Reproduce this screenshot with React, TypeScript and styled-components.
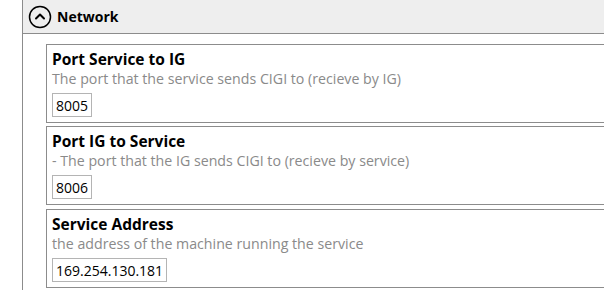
import React from "react";
import styled, { createGlobalStyle } from "styled-components";

const GlobalStyle = createGlobalStyle`
  html, body {
    margin: 0;
    padding: 0;
    background: #ffffff;
    font-family: "Open Sans", "Noto Sans", sans-serif;
    overflow: hidden;
  }
`;

const Page = styled.div`
  width: 604px;
  height: 290px;
  padding-left: 22px;
  box-sizing: border-box;
  overflow: hidden;
`;

const Panel = styled.div`
  height: 100%;
  border-left: 1px solid #8c8c8c;
`;

const Header = styled.div`
  display: flex;
  align-items: center;
  gap: 5px;
  height: 34px;
  padding-left: 5px;
  background: #eeeeee;
  border-bottom: 1px solid #8c8c8c;
  box-sizing: border-box;
`;

const HeaderTitle = styled.span`
  font-size: 14px;
  font-weight: 700;
  color: #000;
`;

const Body = styled.div`
  display: flex;
  flex-direction: column;
  gap: 3px;
  padding: 10px 0 0 23px;
`;

const Card = styled.div<{ $spaced?: boolean }>`
  display: flex;
  flex-direction: column;
  align-items: flex-start;
  margin-top: ${({ $spaced }) => ($spaced ? "1px" : "0")};
  padding: 4px 5px 5px;
  border: 1px solid #8c8c8c;
  border-right: none;
`;

const Title = styled.div`
  font-size: 15.5px;
  line-height: 20px;
  font-weight: 700;
  color: #000;
`;

const Description = styled.div`
  font-size: 14.2px;
  line-height: 19px;
  color: #8a8a8a;
`;

const Field = styled.div`
  margin-top: 5px;
  height: 24px;
  padding: 0 3px;
  box-sizing: border-box;
  display: flex;
  align-items: center;
  border: 1px solid #b4b4b4;
  font-size: 14px;
  color: #000;
`;

const settings = [
  {
    title: "Port Service to IG",
    description: "The port that the service sends CIGI to (recieve by IG)",
    value: "8005",
  },
  {
    title: "Port IG to Service",
    description: "- The port that the IG sends CIGI to (recieve by service)",
    value: "8006",
  },
  {
    title: "Service Address",
    description: "the address of the machine running the service",
    value: "169.254.130.181",
  },
];

export default function App() {
  return (
    <Page>
      <GlobalStyle />
      <Panel>
        <Header>
          <svg width="24" height="24" viewBox="0 0 24 24">
            <circle cx="12" cy="12" r="10.5" fill="none" stroke="#000" strokeWidth="1.5" />
            <polyline
              points="8,13.5 12,9.5 16,13.5"
              fill="none"
              stroke="#000"
              strokeWidth="2"
              strokeLinecap="round"
              strokeLinejoin="round"
            />
          </svg>
          <HeaderTitle>Network</HeaderTitle>
        </Header>
        <Body>
          {settings.map((s, i) => (
            <Card key={s.title} $spaced={i === 2}>
              <Title>{s.title}</Title>
              <Description>{s.description}</Description>
              <Field>{s.value}</Field>
            </Card>
          ))}
        </Body>
      </Panel>
    </Page>
  );
}
